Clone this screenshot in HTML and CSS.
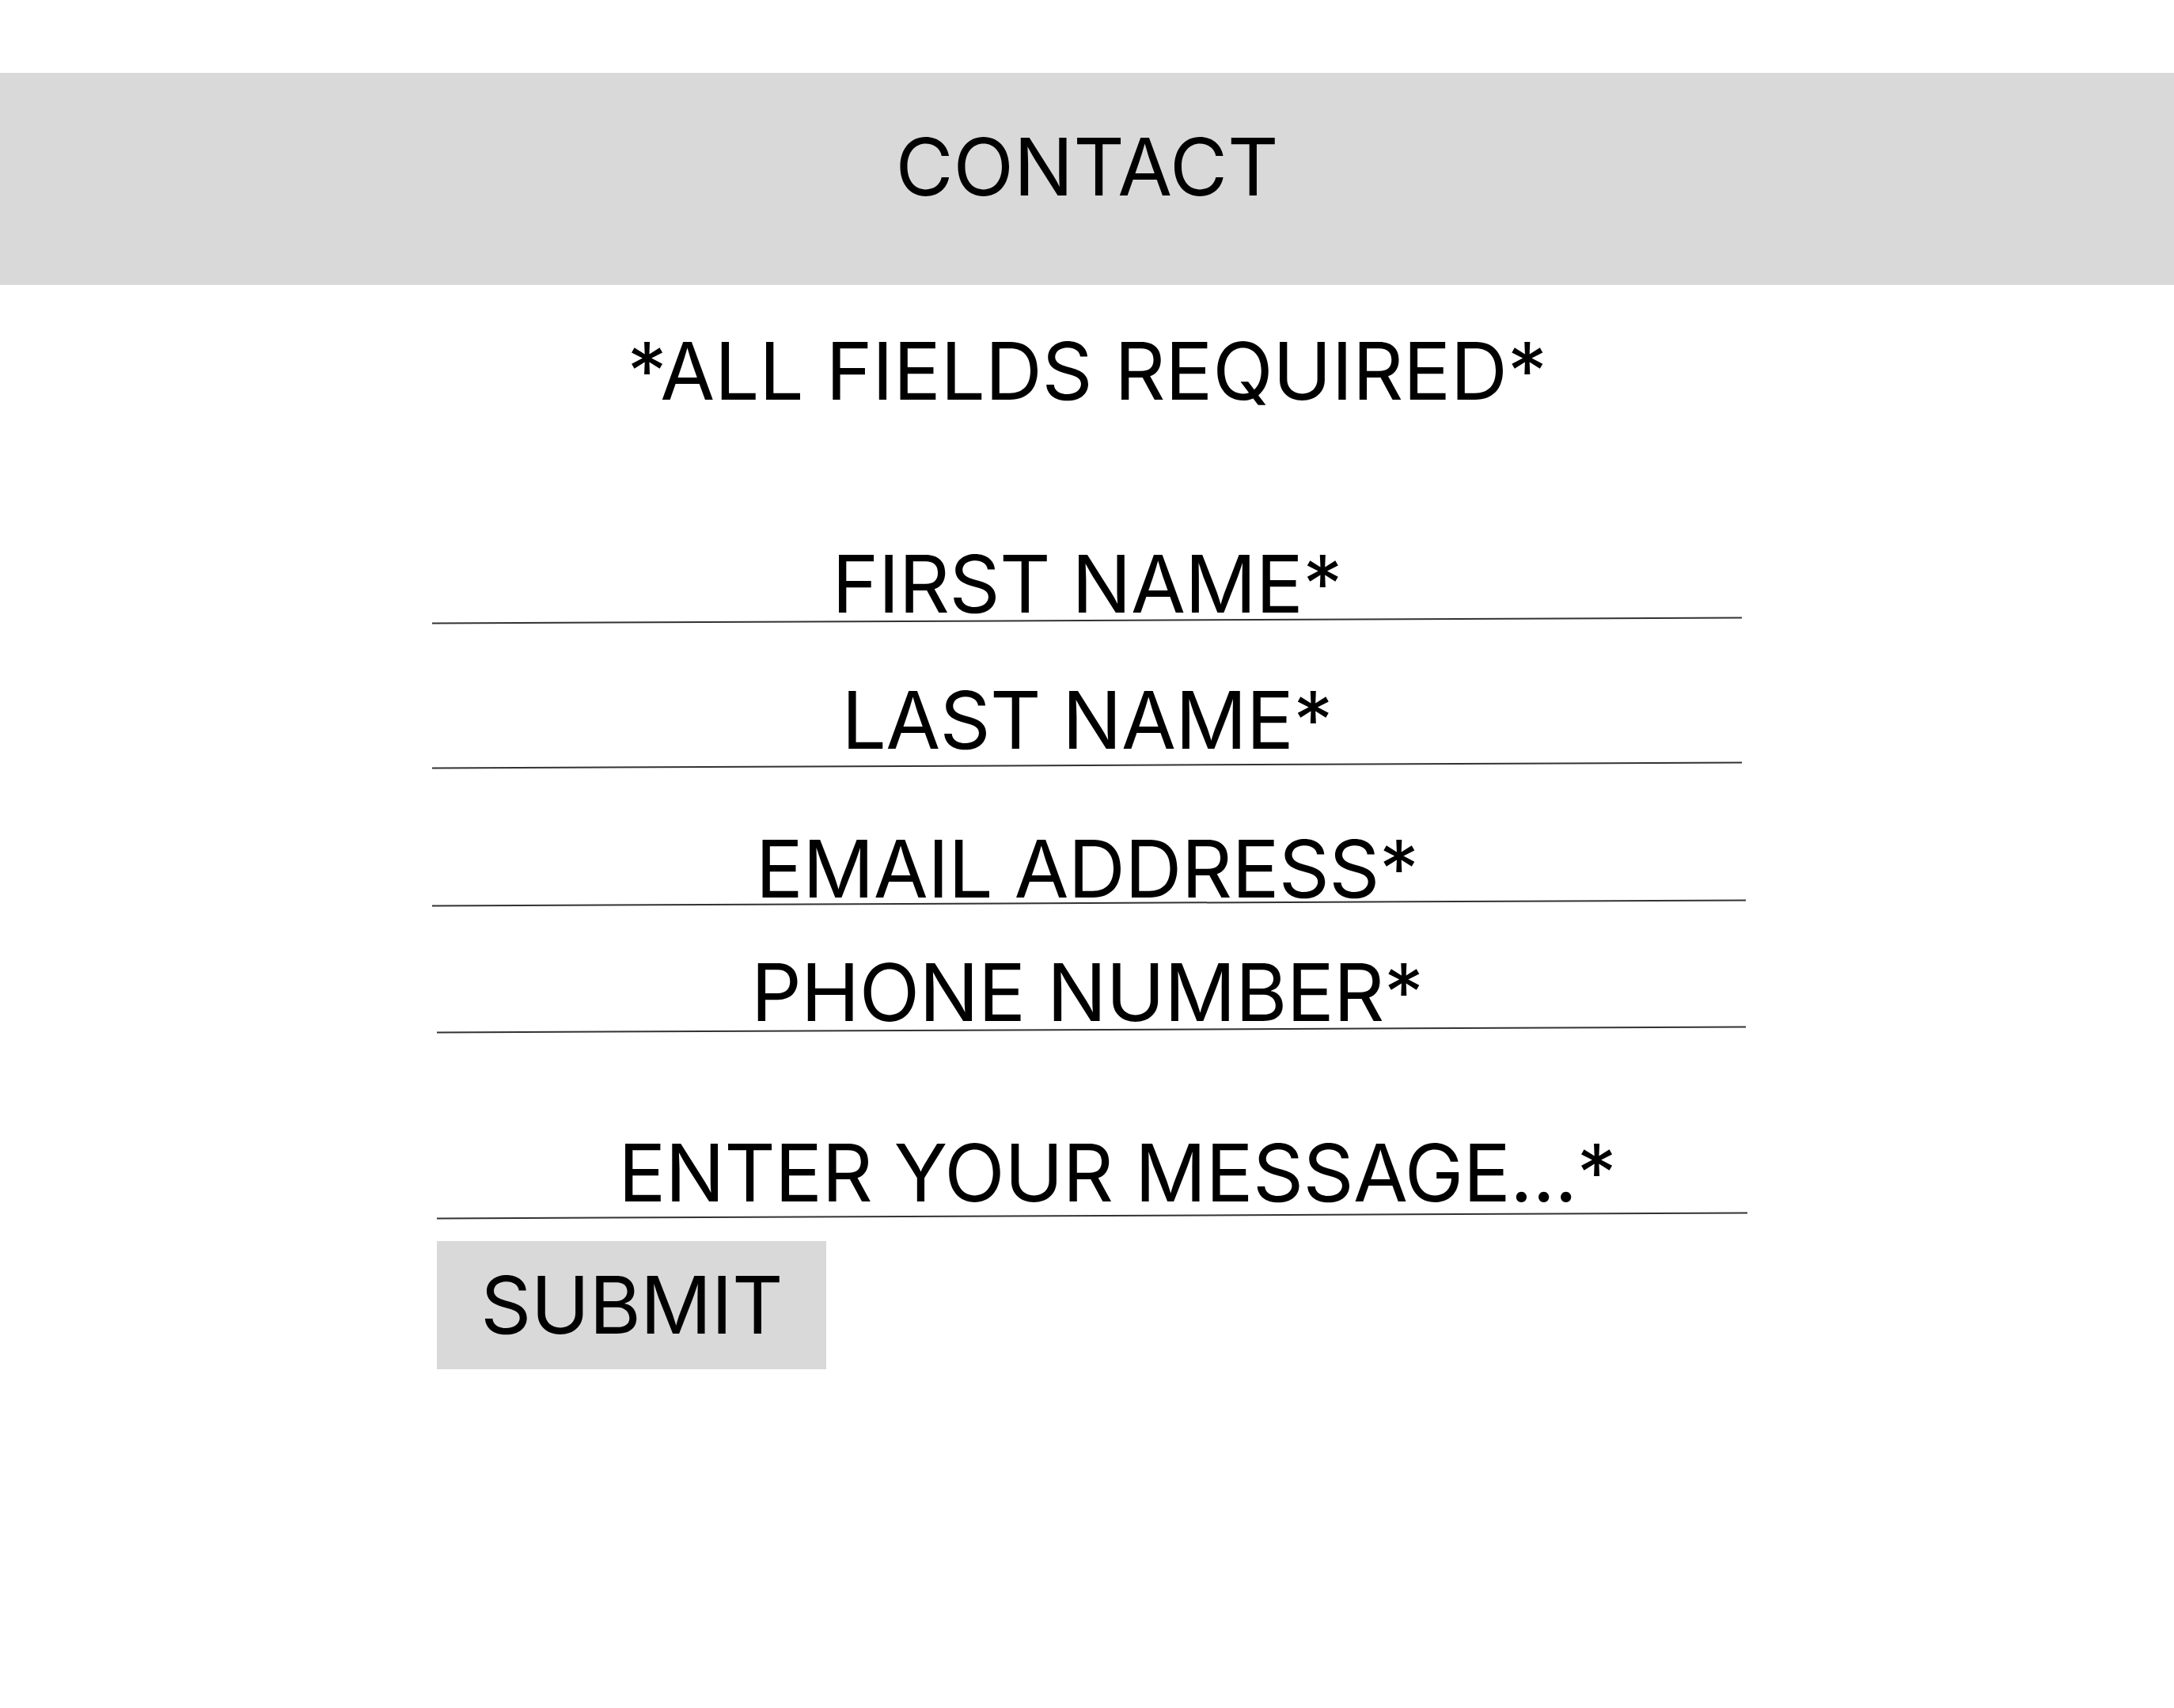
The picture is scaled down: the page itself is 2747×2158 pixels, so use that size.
FILE: index.html
```html
<!DOCTYPE html>
<html lang="en">
<head>
<meta charset="utf-8">
<title>Contact</title>
<link rel="stylesheet" href="styles.css">
</head>
<body>
<div class="page">
  <header class="banner">
    <h1 class="banner-title">CONTACT</h1>
  </header>
  <p class="notice">*ALL FIELDS REQUIRED*</p>
  <form class="form">
    <div class="field field-first">
      <span class="label">FIRST NAME*</span>
      <div class="rule"></div>
    </div>
    <div class="field field-last">
      <span class="label">LAST NAME*</span>
      <div class="rule"></div>
    </div>
    <div class="field field-email">
      <span class="label">EMAIL ADDRESS*</span>
      <div class="rule"></div>
    </div>
    <div class="field field-phone">
      <span class="label">PHONE NUMBER*</span>
      <div class="rule"></div>
    </div>
    <div class="field field-message">
      <span class="label">ENTER YOUR MESSAGE...*</span>
      <div class="rule"></div>
    </div>
    <div class="actions">
      <button type="button" class="submit">SUBMIT</button>
    </div>
  </form>
</div>
</body>
</html>
```

FILE: styles.css
```css
* {
  box-sizing: border-box;
}

html, body {
  margin: 0;
  padding: 0;
  background: #ffffff;
}

body {
  font-family: Inter, "Noto Sans", "Liberation Sans", sans-serif;
  color: #000000;
}

.page {
  padding-top: 92px;
  min-height: 2158px;
}

.banner {
  height: 268px;
  background: #d9d9d9;
  padding-top: 69px;
  text-align: center;
}

.banner-title {
  margin: 0;
  font-size: 100px;
  font-weight: 400;
  line-height: 100px;
}

.notice {
  margin: 59px 0 0;
  text-align: center;
  font-size: 100px;
  line-height: 100px;
  font-weight: 400;
  letter-spacing: -0.3px;
}

.form {
  width: 1655px;
  margin: 169px auto 0;
  display: flex;
  flex-direction: column;
}

.field {
  display: flex;
  flex-direction: column;
}

.label {
  display: block;
  text-align: center;
  font-size: 100px;
  line-height: 100px;
  font-weight: 400;
  letter-spacing: -0.7px;
  white-space: nowrap;
}

.rule {
  height: 1.5px;
  background: #333333;
  transform: rotate(-0.24deg);
}

.field-first .rule {
  margin-top: -5px;
}

.field-last {
  margin-top: 75px;
}

.field-last .rule {
  margin-top: 6px;
}

.field-email {
  margin-top: 81px;
}

.field-email .rule {
  margin-top: -8px;
  margin-right: -5px;
}

.field-phone {
  margin-top: 62px;
}

.field-phone .rule {
  margin-top: -4px;
  margin-left: 6px;
  margin-right: -5px;
}

.field-message {
  margin-top: 131px;
}

.field-message .label {
  padding-left: 76px;
}

.field-message .rule {
  margin-top: 3px;
  margin-left: 6px;
  margin-right: -7px;
}

.actions {
  margin-top: 31px;
  padding-left: 6px;
  display: flex;
}

.submit {
  width: 492px;
  height: 162px;
  border: 0;
  padding: 0;
  background: #d9d9d9;
  font-family: inherit;
  font-size: 100px;
  line-height: 100px;
  font-weight: 400;
  letter-spacing: -0.7px;
  color: #000000;
  text-align: center;
}
```
